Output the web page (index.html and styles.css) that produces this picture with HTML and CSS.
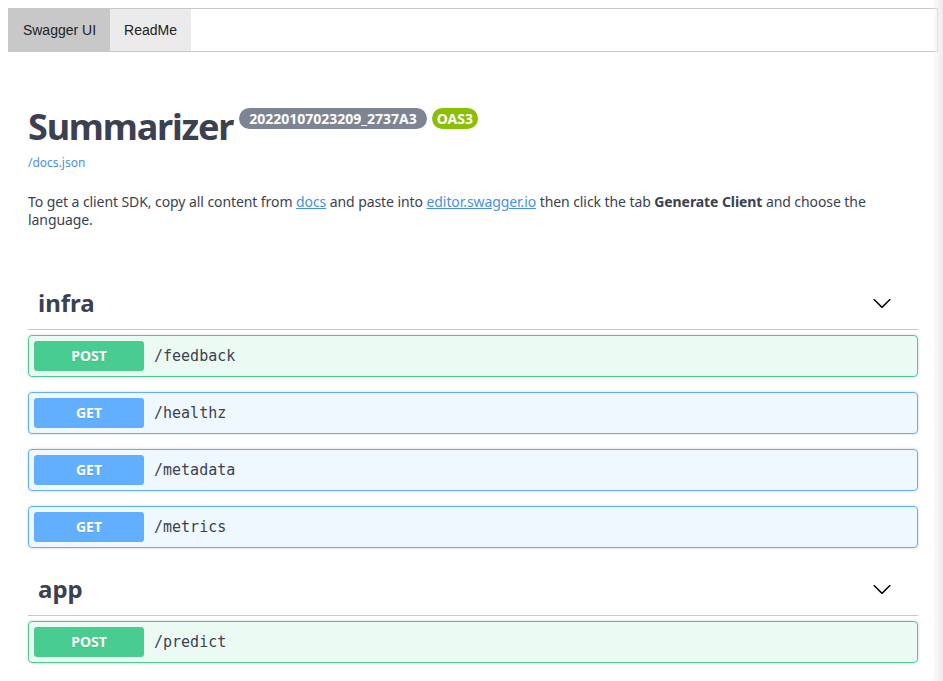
FILE: index.html
```html
<!DOCTYPE html>
<html>
<head>
<meta charset="utf-8">
<link rel="stylesheet" href="styles.css">
</head>
<body>
<div class="tabs">
  <div class="tab active">Swagger UI</div>
  <div class="tab">ReadMe</div>
</div>
<div class="wrap">
  <div class="info">
    <div class="title-row">
      <h2 class="title">Summarizer</h2>
      <span class="badge ver">20220107023209_2737A3</span>
      <span class="badge oas">OAS3</span>
    </div>
    <a class="url" href="#">/docs.json</a>
    <p class="desc">To get a client SDK, copy all content from <a href="#">docs</a> and paste into <a href="#">editor.swagger.io</a> then click the tab <b>Generate Client</b> and choose the language.</p>
  </div>

  <div class="tag">
    <h3 class="tag-title"><span>infra</span>
      <svg class="arrow" width="20" height="20" viewBox="0 0 20 20"><path d="M17.418 6.109c.272-.268.709-.268.979 0s.271.701 0 .969l-7.908 7.830c-.27.268-.707.268-.979 0l-7.908-7.830c-.27-.268-.27-.701 0-.969.271-.268.709-.268.979 0L10 13.25l7.418-7.141z"/></svg>
    </h3>
    <div class="op post"><span class="method">POST</span><span class="path">/feedback</span></div>
    <div class="op get"><span class="method">GET</span><span class="path">/healthz</span></div>
    <div class="op get"><span class="method">GET</span><span class="path">/metadata</span></div>
    <div class="op get"><span class="method">GET</span><span class="path">/metrics</span></div>
  </div>

  <div class="tag">
    <h3 class="tag-title"><span>app</span>
      <svg class="arrow" width="20" height="20" viewBox="0 0 20 20"><path d="M17.418 6.109c.272-.268.709-.268.979 0s.271.701 0 .969l-7.908 7.830c-.27.268-.707.268-.979 0l-7.908-7.830c-.27-.268-.27-.701 0-.969.271-.268.709-.268.979 0L10 13.25l7.418-7.141z"/></svg>
    </h3>
    <div class="op post"><span class="method">POST</span><span class="path">/predict</span></div>
  </div>
</div>
<div class="edge"></div>
</body>
</html>
```

FILE: styles.css
```css
html, body { margin: 0; padding: 0; background: #fff; }
body {
  padding: 8px;
  font-family: "Noto Sans", "Noto Sans CJK KR", sans-serif;
  color: #3b4151;
  overflow: hidden;
}
.tabs {
  width: 930px;
  box-sizing: border-box;
  height: 44px;
  border: 1px solid #c8c8c8;
  display: flex;
}
.tab {
  font-family: "Liberation Sans", Arial, sans-serif;
  font-size: 14px;
  color: #222;
  width: 81px;
  justify-content: center;
  display: flex;
  align-items: center;
  background: #ebebeb;
}
.tab.active { background: #c8c8c8; width: 101px; }
.wrap {
  width: 930px;
  box-sizing: border-box;
  padding: 0 20px;
}
.info { padding: 50px 0 48px; }
.title-row { display: flex; align-items: flex-start; }
.title {
  margin: 0;
  font-size: 36px;
  line-height: 50px;
  font-weight: 700;
  letter-spacing: -1.2px;
  color: #3b4151;
}
.badge {
  margin-top: 6px;
  color: #fff;
  font-size: 14px;
  font-weight: 700;
  line-height: 21px;
  padding: 0 10px;
  border-radius: 57px;
}
.ver { background: #7d8492; margin-left: 6px; }
.oas { background: #89bf04; margin-left: 5px; padding: 0 5px; }
.url {
  display: block;
  font-size: 12px;
  color: #4990e2;
  text-decoration: none;
  margin-top: 3px;
  line-height: 16px;
}
.desc {
  margin: 22px 0 0;
  font-size: 14px;
  line-height: 18px;
  letter-spacing: -0.08px;
}
.desc a { color: #4990e2; }
.desc b { font-weight: 700; }
.tag { display: flex; flex-direction: column; }
.tag-title {
  margin: 0 0 5px;
  padding: 10px 20px 10px 10px;
  font-size: 24px;
  line-height: 32px;
  font-weight: 700;
  border-bottom: 1px solid rgba(59,65,81,.3);
  display: flex;
  align-items: center;
  justify-content: space-between;
}
.arrow { margin-right: 6px; fill: #000; }
.op {
  display: flex;
  align-items: center;
  padding: 5px;
  border: 1px solid;
  border-radius: 4px;
  margin: 0 0 15px;
  box-shadow: 0 0 3px rgba(0,0,0,.19);
}
.op.post { border-color: #49cc90; background: rgba(73,204,144,.1); }
.op.get { border-color: #61affe; background: rgba(97,175,254,.1); }
.method {
  min-width: 80px;
  padding: 6px 15px;
  border-radius: 3px;
  text-align: center;
  color: #fff;
  font-size: 14px;
  font-weight: 700;
  line-height: 18px;
  text-shadow: 0 1px 0 rgba(0,0,0,.1);
}
.post .method { background: #49cc90; }
.get .method { background: #61affe; }
.path {
  padding: 0 10px;
  font-family: "DejaVu Sans Mono", monospace;
  font-size: 15px;
  color: #3b4151;
}
.edge {
  position: fixed;
  top: 0;
  right: 0;
  width: 9px;
  height: 100%;
  background: linear-gradient(to right, rgba(240,240,240,.3), #ececec);
}
```
